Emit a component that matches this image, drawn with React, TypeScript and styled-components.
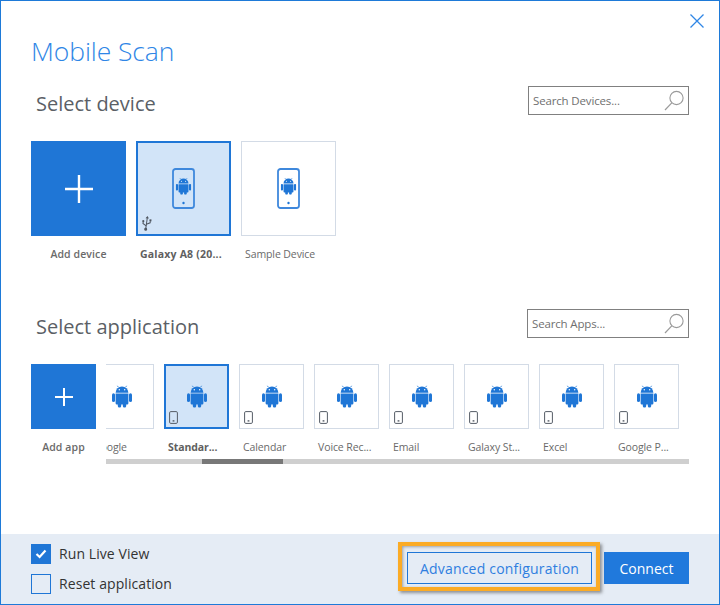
import React from "react";
import styled, { createGlobalStyle } from "styled-components";

const Global = createGlobalStyle`
  html, body { margin: 0; padding: 0; background: #fff; }
  body { font-family: "Open Sans", "Noto Sans", "Liberation Sans", sans-serif; }
  * { box-sizing: border-box; }
`;

const BLUE = "#1f76d6";

const Dialog = styled.div`
  width: 720px;
  height: 605px;
  border: 1px solid #1e7ad8;
  display: flex;
  flex-direction: column;
  background: #fff;
  position: relative;
`;
const Close = styled.button`
  position: absolute;
  top: 12px;
  right: 14px;
  width: 16px;
  height: 16px;
  padding: 0;
  border: 0;
  background: none;
  display: flex;
`;
const Main = styled.main`
  flex: 1;
  padding: 0 30px;
  display: flex;
  flex-direction: column;
`;
const Title = styled.h1`
  margin: 32px 0 0;
  height: 36px;
  font-size: 26.5px;
  line-height: 36px;
  font-weight: 300;
  color: #2f86e6;
  letter-spacing: -0.1px;
`;
const SectionHead = styled.div<{ $top: number }>`
  margin-top: ${(p) => p.$top}px;
  height: 30px;
  display: flex;
  align-items: center;
  justify-content: space-between;
  padding-left: 5px;
`;
const SectionTitle = styled.h2`
  margin: 0;
  font-size: 20px;
  font-weight: 400;
  color: #5b5f66;
  letter-spacing: 0;
`;
const Search = styled.div<{ $w: number; $lift: number }>`
  width: ${(p) => p.$w}px;
  height: 29px;
  margin-bottom: ${(p) => p.$lift}px;
  border: 1px solid #808080;
  display: flex;
  align-items: center;
  justify-content: space-between;
  padding: 0 3px 0 4px;
  font-size: 11.5px;
  color: #6f6f6f;
  letter-spacing: -0.15px;
  background: #fff;
`;
const DeviceRow = styled.div`
  display: flex;
  gap: 10px;
  margin-top: 23px;
`;
const DeviceItem = styled.div`
  width: 95px;
  display: flex;
  flex-direction: column;
`;
const AppItem = styled.div`
  width: 65px;
  flex: none;
  display: flex;
  flex-direction: column;
`;
const AddTile = styled.button<{ $size: number }>`
  width: ${(p) => p.$size}px;
  height: ${(p) => p.$size}px;
  background: ${BLUE};
  border: 0;
  padding: 0;
  display: flex;
  align-items: center;
  justify-content: center;
`;
const Tile = styled.div<{ $size: number; $selected?: boolean }>`
  width: ${(p) => p.$size}px;
  height: ${(p) => p.$size}px;
  position: relative;
  display: flex;
  align-items: center;
  justify-content: center;
  border: ${(p) => (p.$selected ? `2px solid ${BLUE}` : "1px solid #d3dbe6")};
  background: ${(p) => (p.$selected ? "#d2e4f8" : "#fff")};
`;
const Corner = styled.span<{ $inset: number }>`
  position: absolute;
  left: ${(p) => p.$inset}px;
  bottom: ${(p) => p.$inset}px;
  display: flex;
`;
const Label = styled.div<{ $bold?: boolean; $center?: boolean; $tight?: boolean }>`
  margin-top: 11px;
  padding-left: ${(p) => (p.$center ? 0 : 4)}px;
  font-size: 10.5px;
  line-height: 15px;
  height: 15px;
  white-space: nowrap;
  color: ${(p) => (p.$center ? "#6a6a6a" : p.$bold ? "#5f5f5f" : "#6a6a6a")};
  font-weight: ${(p) => (p.$center ? 600 : p.$bold ? 700 : 400)};
  letter-spacing: ${(p) => (p.$tight ? 0.2 : p.$center ? 0.1 : -0.1)}px;
  text-align: ${(p) => (p.$center ? "center" : "left")};
`;
const AppRow = styled.div`
  display: flex;
  gap: 10px;
  margin-top: 23px;
`;
const AppScroller = styled.div`
  width: 583px;
  overflow: hidden;
  position: relative;
  height: 101px;
`;
const AppTrack = styled.div`
  display: flex;
  gap: 10px;
  margin-left: -17px;
`;
const ScrollBar = styled.div`
  position: absolute;
  left: 0;
  right: 0;
  top: 95px;
  height: 5px;
  background: #cfcfcf;
`;
const ScrollThumb = styled.div`
  position: absolute;
  left: 96px;
  width: 81px;
  top: 0;
  bottom: 0;
  background: #787878;
`;
const Footer = styled.footer`
  height: 70px;
  background: #e5ecf5;
  padding: 0 30px;
  display: flex;
  align-items: center;
  justify-content: space-between;
`;
const Checks = styled.div`
  display: flex;
  flex-direction: column;
  gap: 10px;
`;
const CheckRow = styled.label`
  display: flex;
  align-items: center;
  gap: 8px;
  font-size: 14px;
  line-height: 20px;
  color: #333;
  letter-spacing: 0.08px;
`;
const Box = styled.span<{ $on?: boolean }>`
  width: 20px;
  height: 20px;
  border: 1px solid ${BLUE};
  background: ${(p) => (p.$on ? BLUE : "transparent")};
  display: flex;
  align-items: center;
  justify-content: center;
`;
const Buttons = styled.div`
  display: flex;
  gap: 12px;
  margin-bottom: 2px;
`;
const OutlineButton = styled.button`
  width: 185px;
  height: 32px;
  position: relative;
  border: 1px solid ${BLUE};
  background: transparent;
  color: #2f7ee0;
  font: 400 14px "Open Sans", sans-serif;
  letter-spacing: 0.2px;
  padding: 0;
  &::after {
    content: "";
    position: absolute;
    inset: -11px -9px -8px -10px;
    border: 4px solid #fbab25;
    box-shadow: 2px 2px 3px rgba(70, 70, 70, 0.55),
      inset 1px 1px 3px rgba(70, 70, 70, 0.45);
    pointer-events: none;
  }
`;
const PrimaryButton = styled.button`
  width: 85px;
  height: 32px;
  border: 0;
  background: #2079dc;
  color: #fff;
  font: 400 14px "Open Sans", sans-serif;
  padding: 0;
`;

const Plus = ({ size, sw }: { size: number; sw: number }) => (
  <svg width={size} height={size} viewBox={`0 0 ${size} ${size}`}>
    <path d={`M${size / 2} 0V${size}M0 ${size / 2}H${size}`} stroke="#fff" strokeWidth={sw} fill="none" />
  </svg>
);

const Android = ({ size, x = 0, y = 0 }: { size: number; x?: number; y?: number }) => (
  <svg x={x} y={y} width={size} height={size * 1.12} viewBox="0 0 20 22.4">
    <g fill={BLUE}>
      <path d="M3.6 7.8a6.4 6.4 0 0 1 12.8 0z" />
      <path d="M6.3 2.2 5.4 .8M13.7 2.2l.9-1.4" stroke={BLUE} strokeWidth=".8" />
      <path d="M3.6 8.6h12.8v9.6a1.2 1.2 0 0 1-1.2 1.2H4.8a1.2 1.2 0 0 1-1.2-1.2z" />
      <rect x="0" y="8.3" width="3" height="8.6" rx="1.5" />
      <rect x="17" y="8.3" width="3" height="8.6" rx="1.5" />
      <rect x="5.8" y="17" width="3.4" height="5.4" rx="1.5" />
      <rect x="10.8" y="17" width="3.4" height="5.4" rx="1.5" />
    </g>
    <circle cx="7.3" cy="4.8" r=".7" fill="#fff" />
    <circle cx="12.7" cy="4.8" r=".7" fill="#fff" />
  </svg>
);

const PhoneAndroid = () => (
  <svg width="23" height="41" viewBox="0 0 23 41">
    <rect x="1" y="1" width="21" height="39" rx="2.5" fill="none" stroke="#3f88dc" strokeWidth="1.8" />
    <circle cx="11.5" cy="35" r="1.2" fill={BLUE} />
    <Android size={15.5} x={3.75} y={9.5} />
  </svg>
);

const SmallPhone = () => (
  <svg width="9" height="13" viewBox="0 0 9 13">
    <rect x=".6" y=".6" width="7.8" height="11.8" rx="1.2" fill="none" stroke="#555c66" strokeWidth="1" />
    <rect x="3.6" y="9.2" width="1.8" height="1.4" fill="#555c66" />
  </svg>
);

const UsbIcon = () => (
  <svg width="12" height="15" viewBox="0 0 12 15">
    <g transform="rotate(8 6 7.5)">
      <g fill="none" stroke="#4f5660" strokeWidth="1">
        <path d="M5.5 1.5V13.5" />
        <path d="M5.5 10 2 8V6.4" />
        <path d="M5.5 8.4 9 6.4V4.8" />
      </g>
      <path d="M5.5 0 7.2 2.4H3.8z" fill="#4f5660" />
      <circle cx="5.5" cy="13.4" r="1.5" fill="#4f5660" />
      <circle cx="2" cy="5.6" r="1.1" fill="#4f5660" />
      <rect x="8" y="3" width="2" height="2" fill="#4f5660" />
    </g>
  </svg>
);

const SearchGlass = () => (
  <svg width="21" height="21" viewBox="0 0 21 21">
    <circle cx="12.5" cy="8" r="6.6" fill="none" stroke="#9a9a9a" strokeWidth="1.1" />
    <path d="M7.8 12.8 1 20" stroke="#9a9a9a" strokeWidth="1.2" fill="none" />
  </svg>
);

const apps = ["Google", "Standar...", "Calendar", "Voice Rec...", "Email", "Galaxy St...", "Excel", "Google P..."];

export default function App() {
  return (
    <>
      <Global />
      <Dialog>
        <Close aria-label="Close">
          <svg width="16" height="16" viewBox="0 0 16 16">
            <path d="M1.5 1.5 14.5 14.5M14.5 1.5 1.5 14.5" stroke="#2f86e6" strokeWidth="1.3" fill="none" />
          </svg>
        </Close>
        <Main>
          <Title>Mobile Scan</Title>
          <SectionHead $top={19}>
            <SectionTitle>Select device</SectionTitle>
            <Search $w={161} $lift={6}>
              Search Devices...
              <SearchGlass />
            </Search>
          </SectionHead>
          <DeviceRow>
            <DeviceItem>
              <AddTile $size={95}>
                <Plus size={28} sw={2.4} />
              </AddTile>
              <Label $center $bold>Add device</Label>
            </DeviceItem>
            <DeviceItem>
              <Tile $size={95} $selected>
                <PhoneAndroid />
                <Corner $inset={3}>
                  <UsbIcon />
                </Corner>
              </Tile>
              <Label $bold $tight>Galaxy A8 (20...</Label>
            </DeviceItem>
            <DeviceItem>
              <Tile $size={95}>
                <PhoneAndroid />
              </Tile>
              <Label>Sample Device</Label>
            </DeviceItem>
          </DeviceRow>
          <SectionHead $top={49}>
            <SectionTitle>Select application</SectionTitle>
            <Search $w={162} $lift={6}>
              Search Apps...
              <SearchGlass />
            </Search>
          </SectionHead>
          <AppRow>
            <AppItem>
              <AddTile $size={65}>
                <Plus size={18} sw={2} />
              </AddTile>
              <Label $center $bold>Add app</Label>
            </AppItem>
            <AppScroller>
              <AppTrack>
                {apps.map((a, i) => (
                  <AppItem key={a}>
                    <Tile $size={65} $selected={i === 1}>
                      <Android size={20} />
                      {i > 0 && (
                        <Corner $inset={i === 1 ? 3 : 4}>
                          <SmallPhone />
                        </Corner>
                      )}
                    </Tile>
                    <Label $bold={i === 1}>{a}</Label>
                  </AppItem>
                ))}
              </AppTrack>
              <ScrollBar>
                <ScrollThumb />
              </ScrollBar>
            </AppScroller>
          </AppRow>
        </Main>
        <Footer>
          <Checks>
            <CheckRow>
              <Box $on>
                <svg width="12" height="10" viewBox="0 0 12 10">
                  <path d="M1.5 5 4.6 8 10.5 1.6" stroke="#fff" strokeWidth="2.2" fill="none" />
                </svg>
              </Box>
              Run Live View
            </CheckRow>
            <CheckRow>
              <Box />
              Reset application
            </CheckRow>
          </Checks>
          <Buttons>
            <OutlineButton>Advanced configuration</OutlineButton>
            <PrimaryButton>Connect</PrimaryButton>
          </Buttons>
        </Footer>
      </Dialog>
    </>
  );
}
